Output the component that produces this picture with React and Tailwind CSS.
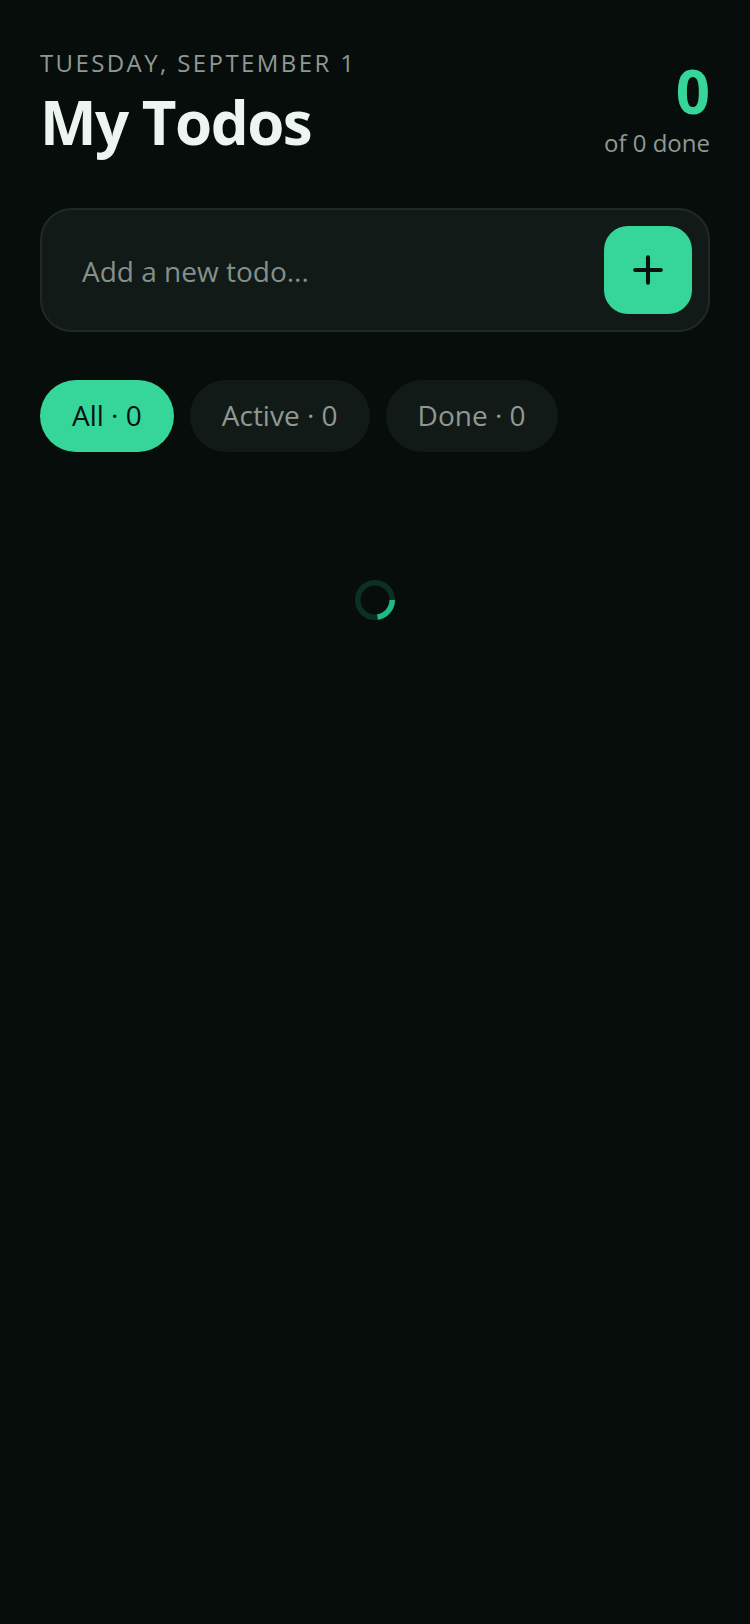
import React, { useState } from 'react';
import { Plus } from 'lucide-react';

const filters = [
  { id: 'all', label: 'All' },
  { id: 'active', label: 'Active' },
  { id: 'done', label: 'Done' },
];

const Header = ({ done, total }) => (
  <header className="flex items-end justify-between pb-0.5">
    <div>
      <p className="text-2xl leading-[30px] tracking-widest uppercase text-[#8e9993]">Tuesday, September 1</p>
      <h1 className="mt-1 text-6xl leading-20 font-bold tracking-tight text-[#ecf5f0]">My Todos</h1>
    </div>
    <div className="pb-[3px] text-right">
      <p className="text-6xl leading-16 font-bold text-[#36d69b]">{done}</p>
      <p className="mt-1 text-2xl leading-8 text-[#8e9993]">of {total} done</p>
    </div>
  </header>
);

const AddTodo = ({ onAdd }) => {
  const [text, setText] = useState('');

  const handleSubmit = (e) => {
    e.preventDefault();
    if (!text.trim()) return;
    onAdd(text.trim());
    setText('');
  };

  return (
    <form
      onSubmit={handleSubmit}
      className="mt-11 flex items-center gap-4 rounded-4xl border-2 border-[#1f2925] bg-[#121a17] p-4"
    >
      <input
        type="text"
        aria-label="New todo"
        placeholder="Add a new todo..."
        value={text}
        onChange={(e) => setText(e.target.value)}
        className="h-20 min-w-0 flex-1 bg-transparent px-6 pt-0.5 text-[28px] text-[#ecf5f0] outline-none placeholder:text-[#84908a]"
      />
      <button
        type="submit"
        aria-label="Add todo"
        className="flex size-22 shrink-0 items-center justify-center rounded-3xl bg-[#36d69b] text-[#07130e]"
      >
        <Plus className="size-11" strokeWidth={2.2} />
      </button>
    </form>
  );
};

const App = () => {
  const [todos, setTodos] = useState([]);
  const [filter, setFilter] = useState('all');

  const done = todos.filter((t) => t.done).length;
  const counts = { all: todos.length, active: todos.length - done, done };

  return (
    <main className="min-h-screen bg-[#070d0b] px-10 pt-12 font-['Open_Sans',sans-serif]">
      <Header done={done} total={todos.length} />
      <AddTodo onAdd={(title) => setTodos([...todos, { title, done: false }])} />

      <div className="mt-12 flex gap-4">
        {filters.map((f) => (
          <button
            key={f.id}
            type="button"
            aria-pressed={filter === f.id}
            onClick={() => setFilter(f.id)}
            className={`h-18 rounded-full px-8 pb-0.5 text-[28px] ${
              filter === f.id ? 'bg-[#36d69b] text-[#07130e]' : 'bg-[#121a17] text-[#8e9993]'
            }`}
          >
            {f.label} · {counts[f.id]}
          </button>
        ))}
      </div>

      <div role="status" aria-label="Loading" className="flex justify-center pt-32">
        <svg className="size-10" viewBox="0 0 40 40" fill="none" strokeWidth="5.5">
          <circle cx="20" cy="20" r="17.25" stroke="#0d3024" />
          <path d="M37.25 20A17.25 17.25 0 0 1 22.5 37.07" stroke="#1dbb83" />
        </svg>
      </div>
    </main>
  );
};

export default App;
